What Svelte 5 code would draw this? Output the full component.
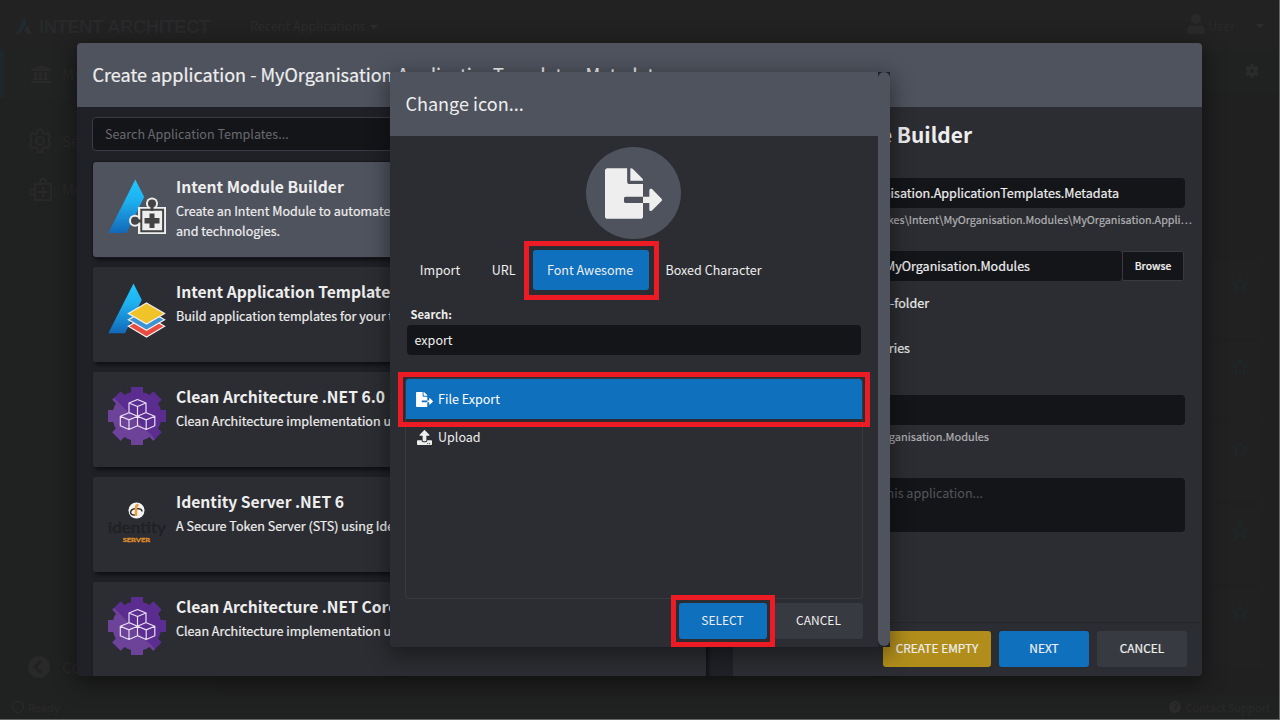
<script>
  const templates = [
    { icon: 'module', name: 'Intent Module Builder', text: 'Create an Intent Module to automate your patterns, frameworks and technologies.', selected: true },
    { icon: 'layers', name: 'Intent Application Template Builder', text: 'Build application templates for your teams.' },
    { icon: 'gear', name: 'Clean Architecture .NET 6.0', text: 'Clean Architecture implementation using .NET 6.' },
    { icon: 'identity', name: 'Identity Server .NET 6', text: 'A Secure Token Server (STS) using Identity Server.' },
    { icon: 'gear', name: 'Clean Architecture .NET Core 3.1', text: 'Clean Architecture implementation using .NET Core.' }
  ];
  const tabs = ['Import', 'URL', 'Font Awesome', 'Boxed Character'];
  const activeTab = 'Font Awesome';
  const rows = [0, 1, 2, 3, 4];
  const fileExport = 'M384 121.9c0-6.3-2.5-12.4-7-16.9L279.1 7c-4.5-4.5-10.6-7-17-7H256v128h128zM571 308l-95.7-96.4c-10.1-10.1-27.4-3-27.4 11.3V288h-64v64h64v65.2c0 14.3 17.3 21.4 27.4 11.3L571 332c6.6-6.6 6.6-17.4 0-24zm-379 28v-32c0-8.8 7.2-16 16-16h176V160H248c-13.2 0-24-10.8-24-24V0H24C10.7 0 0 10.7 0 24v464c0 13.3 10.7 24 24 24h336c13.3 0 24-10.7 24-24V352H208c-8.8 0-16-7.2-16-16z';
  const upload = 'M296 384h-80c-13.3 0-24-10.7-24-24V192h-87.7c-17.8 0-26.7-21.5-14.1-34.1L242.3 5.7c7.5-7.5 19.8-7.5 27.3 0l152.2 152.2c12.6 12.6 3.7 34.1-14.1 34.1H320v168c0 13.3-10.7 24-24 24zm216-8v112c0 13.3-10.7 24-24 24H24c-13.3 0-24-10.7-24-24V376c0-13.3 10.7-24 24-24h136v8c0 30.9 25.1 56 56 56h80c30.9 0 56-25.1 56-56v-8h136c13.3 0 24 10.7 24 24zm-124 88c0-11-9-20-20-20s-20 9-20 20 9 20 20 20 20-9 20-20zm64 0c0-11-9-20-20-20s-20 9-20 20 9 20 20 20 20-9 20-20z';
  const teeth = [0, 45, 90, 135, 180, 225, 270, 315];
</script>

<svelte:head><title>Intent Architect</title></svelte:head>

<div class="screen">
  <div class="shell">
    <header class="topbar">
      <svg class="brand-mark" width="17" height="18" viewBox="0 0 17 18"><path d="M8 0 11 6 4 17H0z" fill="#202a30" /><path d="M12 8 16 17H12L8 13z" fill="#29292a" /></svg>
      <b class="brand">INTENT ARCHITECT</b>
      <span class="recent">Recent Applications <i class="caret"></i></span>
      <svg class="user-icon" width="18" height="20" viewBox="0 0 18 20"><circle cx="9" cy="5" r="5" /><path d="M0 18c0-5 2-7 5-7 2 1 6 1 8 0 3 0 5 2 5 7 0 1-1 2-2 2H2c-1 0-2-1-2-2z" /></svg>
      <span class="user">User</span><i class="caret"></i>
    </header>
    <div class="workspace">
      <nav class="sidebar">
        <div class="nav-item current">
          <svg width="20" height="18" viewBox="0 0 20 18"><path d="M10 0 20 4v2H0V4zM3 7h3v7h2V7h3v7h2V7h3v7h2v1H2v-1h1zM0 16h20v2H0z" /></svg><span>My Organisation</span>
        </div>
        <div class="nav-item gap">
          <svg width="24" height="24" viewBox="0 0 24 24" fill="none" stroke="#292828" stroke-width="2"><path d="M10 1h4l1 3 2 1 3-1 2 3-1 3v3l1 3-2 3-3-1-2 1-1 4h-4l-1-4-2-1-3 1-2-3 1-3v-3L2 7l2-3 3 1 2-1z" /><circle cx="12" cy="12" r="4" /></svg><span>Settings</span>
        </div>
        <div class="nav-item">
          <svg width="24" height="24" viewBox="0 0 24 24" fill="none" stroke="#292828" stroke-width="2"><path d="M7 7h16v16H7zM15 10v10M10 15h10M13 7a3 3 0 1 1 4 0M7 13a3 3 0 1 0 0 4" /></svg><span>Modules</span>
        </div>
        <div class="nav-item collapse">
          <svg width="22" height="22" viewBox="0 0 22 22"><circle cx="11" cy="11" r="11" /><path d="m13 5-6 6 6 6" fill="none" stroke="#202221" stroke-width="3" /></svg><span>Collapse</span>
        </div>
      </nav>
      <main class="listing">
        <div class="listing-head">
          <svg width="14" height="14" viewBox="0 0 14 14"><path d="M6 0h2l.5 2 1.500.8 2-.8 1.500 2.500L12 6v2l1.500 1.500L12 12l-2-.8-1.500.8L8 14H6l-.5-2-1.500-.8L2 12 .5 9.500 2 8V6L.5 4.500 2 2l2 .8L5.500 2z" fill="#2a2c2c" /><circle cx="7" cy="7" r="2" fill="#202221" /></svg>
        </div>
        {#each rows as row (row)}
          <div class="listing-row"><svg width="16" height="16" viewBox="0 0 16 16"><path d="m8 1 2.1 4.6 4.9.6-3.6 3.4 1 5L8 12.200l-4.400 2.400 1-5L1 6.200l4.900-.6z" fill="none" stroke="#1f282b" stroke-width="1.300" /></svg></div>
        {/each}
      </main>
    </div>
    <footer class="status"><i class="ring"></i><span>Ready</span><span class="support"><b class="help">?</b>Contact Support</span></footer>
  </div>

  <section class="dialog create">
    <header class="dialog-head">Create application - MyOrganisation.ApplicationTemplates.Metadata</header>
    <div class="create-body">
      <div class="catalog">
        <div class="search">Search Application Templates...</div>
        {#each templates as t, i (i)}
          <article class="card" class:selected={t.selected}>
            <svg class="card-icon" width="58" height="58" viewBox="0 0 58 58">
              {#if t.icon === 'module'}
                <defs><linearGradient id="blue" x1="0" y1="0" x2="0" y2="1"><stop offset="0" stop-color="#20c8ff" /><stop offset=".4" stop-color="#1eb0f0" /><stop offset="1" stop-color="#1268b8" /></linearGradient></defs>
                <path d="M27.300 2.500 36.200 20 18.500 56H.3z" fill="url(#blue)" />
                <g fill="#eee"><circle cx="44" cy="26.500" r="6" /><circle cx="27" cy="43.700" r="6" /><path d="M30 30h28v27H30z" /></g>
                <g fill="#444"><circle cx="44" cy="26.500" r="4" /><circle cx="27" cy="43.700" r="4" /><path d="M42.500 28h3v6h-3zM28 42.500h6v3h-6zM41.500 36.500h5V41h5v5.500h-5V51h-5v-4.500h-5V41h5z" /></g>
                <path d="M33.300 32.800h21.800v21.500H33.300z" fill="none" stroke="#444" stroke-width="2" />
              {:else if t.icon === 'layers'}
                <path d="M25.500 1.500 33.800 18 17 51.300H.3z" fill="url(#blue)" />
                <g stroke="#f3eeee" stroke-width="1.300"><path d="m38.500 33.500 18 10.800-18 10.800-18-10.800z" fill="#e94b41" /><path d="m38.500 27.300 18 10.500-18 10.500-18-10.500z" fill="#3993d5" /><path d="m38.500 21 18 10.500-18 10.500-18-10.500z" fill="#f0c328" /></g>
              {:else if t.icon === 'gear'}
                <g fill="#5c2d91">
                  <circle cx="29" cy="29" r="24.500" />
                  {#each teeth as a (a)}<path d="M23 0h12v8H23z" transform={`rotate(${a} 29 29)`} />{/each}
                </g>
                <g fill="#6d4299" clip-path="url(#half)">
                  <circle cx="29" cy="29" r="24.500" />
                  {#each teeth as a (a)}<path d="M23 0h12v8H23z" transform={`rotate(${a} 29 29)`} />{/each}
                </g>
                <clipPath id="half"><path d="M0 5v53h53z" /></clipPath>
                <path d="m29.500 12.500 8.500 3.500v9.500l-8.500 3.700-8.500-3.700V16zM21 16l8.500 3.500L38 16M29.500 19.500v9.500M21 25.700l8.500 3.600v9.500L21 42.500l-8.700-3.700v-9.500zM12.300 29.300l8.700 3.600 8.500-3.600M21 33v9.500M38.200 25.700l8.600 3.600v9.500l-8.600 3.700-8.700-3.700M29.500 29.300l8.700 3.600 8.600-3.600M38.200 33v9.500" fill="none" stroke="#e9dff5" stroke-width="1.200" stroke-linejoin="round" />
              {:else}
                <circle cx="28.500" cy="18.500" r="8" fill="#f4f4f4" />
                <path d="M27 23c-6 1-6-6 1-6.500 5 0 6 2 6 3" fill="none" stroke="#333" stroke-width="1.500" />
                <path d="M28 24V16c0-2 1-3 2.500-3" fill="none" stroke="#f39a35" stroke-width="2.500" />
                <text x="0" y="41" textLength="58" lengthAdjust="spacingAndGlyphs" font-family="Lato, sans-serif" font-size="15.500" fill="#202024" stroke="#202024" stroke-width=".4">identity</text>
                <text x="14.700" y="50.200" textLength="27.500" lengthAdjust="spacingAndGlyphs" font-family="Lato, sans-serif" font-size="6" font-weight="900" fill="#dc8c2c" stroke="#dc8c2c" stroke-width=".3">SERVER</text>
              {/if}
            </svg>
            <div class="card-text"><h3>{t.name}</h3><p>{t.text}</p></div>
          </article>
        {/each}
      </div>
      <div class="details">
        <h2><span>Intent Module Builder</span></h2>
        <div class="field name"><span>MyOrganisation.ApplicationTemplates.Metadata</span></div>
        <div class="hint path"><span>C:\Dev\Spikes\Intent\MyOrganisation.Modules\MyOrganisation.Appli…</span></div>
        <div class="location"><div class="field"><span>C:\Dev\MyOrganisation.Modules</span></div><button class="browse">Browse</button></div>
        <div class="check folder"><span>Create in sub-folder</span></div>
        <div class="check ries"><span>Set up directories</span></div>
        <div class="field blank"></div>
        <div class="hint sol"><span>MyOrganisation.Modules</span></div>
        <div class="field area"><span>Describe this application...</span></div>
        <footer class="actions"><button class="gold">CREATE EMPTY</button><button class="primary">NEXT</button><button>CANCEL</button></footer>
      </div>
    </div>
  </section>

  <section class="dialog picker">
    <div class="picker-main">
      <header class="dialog-head">Change icon...</header>
      <div class="preview"><svg width="57" height="51" viewBox="0 0 576 512" fill="#eee"><path d={fileExport} /></svg></div>
      <div class="tabs">
        {#each tabs as tab (tab)}<button class="tab" class:active={tab === activeTab}>{tab}</button>{/each}
      </div>
      <label class="label" for="q">Search:</label>
      <div class="field query" id="q">export</div>
      <div class="results">
        <div class="result active"><svg width="17" height="15" viewBox="0 0 576 512" fill="#fff"><path d={fileExport} /></svg><span>File Export</span></div>
        <div class="result"><svg width="15" height="15" viewBox="0 0 512 512" fill="#eee"><path d={upload} /></svg><span>Upload</span></div>
      </div>
      <footer class="picker-actions"><button class="primary">SELECT</button><button>CANCEL</button></footer>
    </div>
    <div class="track"><div class="thumb"></div></div>
  </section>

  <i class="mark m-tab"></i><i class="mark m-row"></i><i class="mark m-select"></i>
</div>

<style>
  :global(body) { background: #222; }
  .screen, .screen * { box-sizing: border-box; }
  .screen { position: relative; width: 1280px; height: 720px; overflow: hidden; background: #222; border-right: 1px solid #666; border-bottom: 1px solid #666; color: #eee; font: 12.550px/20px "Noto Sans CJK SC", sans-serif; }
  svg { display: block; flex: none; }
  h2, h3, p { margin: 0; }
  button { border: 0; border-radius: 3px; background: #383a42; color: #eee; font: inherit; padding: 0; white-space: nowrap; }

  .shell { height: 719px; display: flex; flex-direction: column; color: #2a2929; fill: #292929; }
  .topbar { height: 50px; flex: none; display: flex; align-items: center; padding: 1px 15px 0 16px; }
  .brand { font: 700 18.500px/20px "Liberation Sans", sans-serif; margin: 2px 0 0 6px; width: 211px; white-space: nowrap; color: #28292a; letter-spacing: -.45px; }
  .recent { flex: 1; color: #2c2b2b; }
  .caret { display: inline-block; border: 4px solid transparent; border-top-color: #2d2d2d; border-bottom: 0; margin-left: 2px; vertical-align: 2px; }
  .user { margin: 0 19px 0 3px; }
  .user-icon { margin-top: -3px; }
  .workspace { flex: 1; display: flex; min-height: 0; }
  .sidebar { width: 218px; background: #202221; display: flex; flex-direction: column; font-size: 15px; }
  .nav-item { height: 48px; display: flex; align-items: center; gap: 10px; padding-left: 28px; }
  .nav-item.current { border-left: 4px solid #1e272b; padding-left: 27px; gap: 11px; background: #212222; }
  .nav-item.gap { margin-top: 19px; }
  .nav-item.collapse { margin-top: auto; margin-bottom: 4px; gap: 12px; }
  .listing { flex: 1; background: #202020; padding-right: 16px; }
  .listing-head { height: 42px; display: flex; align-items: center; justify-content: flex-end; background: #202221; margin: 0 -16px 167px 0; padding-right: 20px; }
  .listing-row { height: 79px; margin-bottom: 3px; background: #212121; display: flex; justify-content: flex-end; padding: 18px 15px 0 0; }
  .status { height: 24px; flex: none; display: flex; align-items: center; gap: 4px; padding: 0 9px 1px 12px; background: #202221; font-size: 11px; }
  .ring { width: 12px; height: 12px; border: 1px solid #2b2b2b; border-radius: 50%; }
  .support { margin-left: auto; display: flex; align-items: center; gap: 4px; }
  .help { width: 12px; height: 12px; border-radius: 50%; background: #2b2b2b; color: #202221; font-size: 9px; line-height: 12px; text-align: center; }

  .dialog { position: absolute; border-radius: 4px; overflow: hidden; }
  .dialog-head { height: 64px; background: #4f535e; padding-left: 15.500px; font-size: 18.050px; line-height: 62px; white-space: nowrap; }
  .create { left: 77px; top: 43px; width: 1125px; height: 633px; background: #202127; box-shadow: 0 6px 22px 2px rgba(0, 0, 0, .45); -webkit-text-stroke: .2px; }
  .create-body { display: flex; height: 569px; }
  .catalog { width: 656px; padding: 10px 27px 0 15px; overflow: hidden; }
  .search { height: 34px; margin-bottom: 11px; background: #141519; border: 1px solid #3a3c43; border-radius: 4px; padding-left: 12px; line-height: 32px; color: #696a6e; -webkit-text-stroke: 0; }
  .card { height: 95px; margin: 0 0 10px 1px; background: #2c2d32; border-radius: 2px; padding: 15px; display: flex; gap: 10px; box-shadow: 2px 3px 4px rgba(0, 0, 0, .55); }
  .card.selected { background: #4f535e; border-radius: 3px; box-shadow: 0 0 0 1px #17181c, 2px 3px 4px rgba(0, 0, 0, .6); }
  .card-text { flex: 1; padding-right: 130px; }
  h3 { font-size: 15.650px; line-height: 20px; font-weight: 700; margin-bottom: 4px; white-space: nowrap; -webkit-text-stroke: 0; }

  .details { flex: 1; min-width: 0; background: #2c2d32; display: flex; flex-direction: column; padding-left: 16px; }
  h2, .details .field, .hint, .check { display: flex; justify-content: flex-end; white-space: nowrap; }
  h2 { font-size: 20.900px; line-height: 30px; padding: 12px 230px 0 0; height: 71px; -webkit-text-stroke: 0; }
  .field { background: #141519; border-radius: 4px; height: 30px; line-height: 30px; }
  .name { margin-right: 17px; padding-right: 66px; }
  .hint { font-size: 11px; line-height: 20px; color: #b0b1b3; }
  .path { padding-right: 10px; margin-top: 1px; font-size: 10.800px; }
  .location { display: flex; margin: 22px 18px 0 0; }
  .location .field { flex: 1; padding-right: 92px; }
  .browse { width: 62px; height: 30px; background: #141519; border: 1px solid #383a40; border-radius: 2px; font-size: 10.300px; font-weight: 500; }
  .folder { margin-top: 12px; padding-right: 273px; }
  .ries { margin-top: 25px; padding-right: 292px; }
  .blank { margin: 37px 17px 0 0; }
  .sol { margin-top: 1px; padding-right: 213px; }
  .details .area { height: 54px; margin: 32px 17px 0 0; padding-right: 202px; color: #55565a; -webkit-text-stroke: 0; }
  .actions { margin: 90px 0 0 -16px; border-top: 1px solid #26272b; padding: 8px 15px 0 0; display: flex; justify-content: flex-end; gap: 8px; }
  .actions button { width: 90px; height: 36px; font-size: 11.900px; padding-bottom: 2px; }
  .actions .gold { width: 108px; background: #b18e1b; }
  .actions .primary, .picker-actions .primary { background: #0f70be; }

  .picker { left: 390px; top: 72px; width: 500px; height: 575px; display: flex; border-radius: 4px 0 0 4px; background: #2c2d32; box-shadow: 0 6px 22px 2px rgba(0, 0, 0, .42); }
  .picker-main { width: 488px; }
  .track { width: 12px; background: #202127; }
  .thumb { height: 574px; border-radius: 6px; background: #4f535e; }
  .preview { width: 95px; height: 92px; border-radius: 50%; background: #4f535e; margin: 11px 0 0 196px; padding: 21px 0 0 19px; }
  .tabs { display: flex; margin: 11px 0 0 14px; }
  .tab { height: 40px; padding: 0 15.500px; background: none; }
  .tab:nth-child(1) { width: 72px; }
  .tab:nth-child(2) { width: 57px; padding: 0 16px 0 14.500px; }
  .tab.active { background: #0f70be; width: 116px; margin-right: 1px; padding: 0 16px 0 14px; }
  .label { display: block; margin: 14px 0 1px 20.500px; font-size: 11.200px; font-weight: 700; line-height: 20px; }
  .query { margin: 0 17px 0 17px; padding-left: 7.500px; }
  .results { height: 221px; margin: 23px 15px 0; border: 1px solid #393a40; border-radius: 4px; overflow: hidden; }
  .result { height: 38px; padding-left: 11px; display: flex; align-items: center; gap: 6px; line-height: 38px; }
  .result.active { height: 40px; padding-left: 10px; gap: 5px; background: #0f70be; margin-bottom: -1px; color: #fff; }
  .picker-actions { display: flex; justify-content: flex-end; gap: 7px; padding: 4px 15px 0 0; }
  .picker-actions button { width: 89px; height: 36px; font-size: 12px; padding-bottom: 2px; }
  .picker-actions .primary { width: 88px; padding-right: 1px; }

  .mark { position: absolute; border: 5px solid #ed1c24; }
  .m-tab { left: 524px; top: 241px; width: 135px; height: 59px; }
  .m-row { left: 398px; top: 372px; width: 472px; height: 55px; }
  .m-select { left: 671px; top: 595px; width: 104px; height: 52px; }
</style>
